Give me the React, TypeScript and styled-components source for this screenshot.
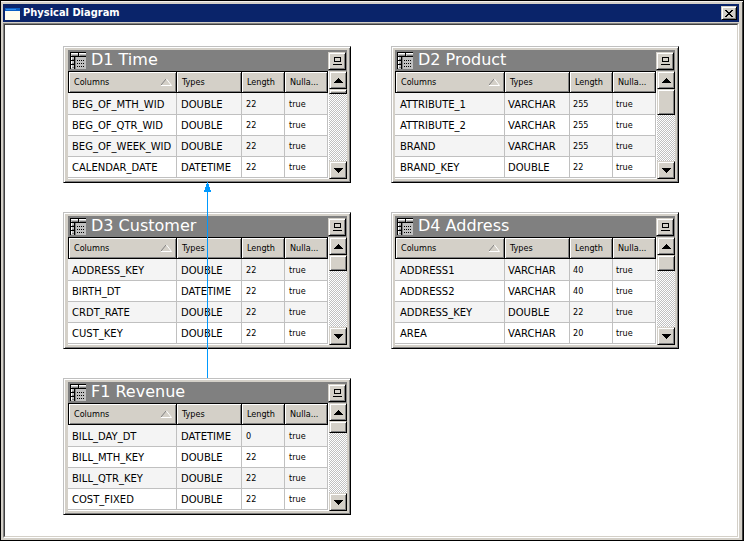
import React from "react";
import styled, { createGlobalStyle, css } from "styled-components";

const face = "#d4d0c8";
const shade = "#808080";
const grid = "#c0c0c0";

const GlobalStyle = createGlobalStyle`
  *, *::before, *::after { box-sizing: border-box; }
  body { margin: 0; background: #000; font-family: "DejaVu Sans", Verdana, sans-serif; color: #000; }
  button { font: inherit; margin: 0; padding: 0; }
`;

const raised = css`
  background: ${face};
  border: 1px solid;
  border-color: ${face} #000 #000 ${face};
  box-shadow: inset 1px 1px #fff, inset -1px -1px ${shade};
`;

const WindowFrame = styled.main`
  display: flex;
  flex-direction: column;
  min-height: 100vh;
  padding: 3px 4px 2px 2px;
  border: 1px solid #000;
  background: ${face};
  box-shadow: inset 0 1px #f4f2ee, inset -1px 0 #404040;
`;

const WindowBar = styled.header`
  display: flex;
  align-items: center;
  gap: 3px;
  height: 18px;
  padding: 0 2px;
  background: #0a246a;
  color: #fff;
`;

const WindowTitle = styled.h1`
  flex: 1;
  margin: 0;
  font: bold 11px/18px "DejaVu Sans Condensed", "DejaVu Sans", sans-serif;
`;

const CloseButton = styled.button`
  ${raised}
  display: grid;
  place-items: center;
  width: 16px;
  height: 14px;
`;

const Sunken = styled.div`
  display: flex;
  flex: 1;
  margin-top: 1px;
  border: 1px solid;
  border-color: ${shade} #fff #fff ${shade};
`;

const Canvas = styled.div`
  position: relative;
  flex: 1;
  border: 1px solid;
  border-color: #404040 ${face} ${face} #404040;
  background: #fff;
`;

const Node = styled.section<{ $x: number; $y: number; $wide: boolean }>`
  position: absolute;
  left: ${(p) => p.$x}px;
  top: ${(p) => p.$y}px;
  width: 288px;
  padding: 3px 3px 3px ${(p) => (p.$wide ? 3 : 4)}px;
  border: 1px solid;
  border-color: ${grid} #000 #000 ${grid};
  background: ${face};
  box-shadow: inset 1px 1px #fff, inset -1px -1px ${shade};
`;

const NodeBar = styled.header`
  display: flex;
  align-items: center;
  gap: 5px;
  height: 21px;
  padding: 0 1px 0 2px;
  background: ${shade};
  color: #fff;
`;

const NodeTitle = styled.h2`
  flex: 1;
  margin: 0;
  font-size: 16px;
  font-weight: normal;
  line-height: 19px;
  padding-bottom: 2px;
`;

const SquareButton = styled.button`
  ${raised}
  display: grid;
  place-items: center;
  flex: none;
  width: 18px;
  height: 18px;
`;

const NodeBody = styled.div`
  display: flex;
  height: 108px;
`;

const TableView = styled.div`
  flex: 1;
  min-width: 0;
  padding-right: 1px;
  overflow: hidden;
  background: #fff;
`;

const Table = styled.table`
  width: 100%;
  table-layout: fixed;
  border-spacing: 0;
  white-space: nowrap;
`;

const Col = styled.col<{ $w?: number }>`
  width: ${(p) => (p.$w ? p.$w + "px" : "auto")};
`;

const HeadCell = styled.th`
  height: 22px;
  padding: 0 4px 0 5px;
  border: solid #000;
  border-width: 1px 1px 1px 0;
  background: ${face};
  box-shadow: inset 1px 1px #fff, inset -1px -1px ${shade};
  font: normal 9px/20px "DejaVu Sans Condensed", "DejaVu Sans", sans-serif;
  text-align: left;

  &:first-child { border-left-width: 1px; }
`;

const HeadContent = styled.div`
  display: flex;
  align-items: center;
  justify-content: space-between;
`;

const Row = styled.tr`
  background: #fff;
  &:nth-child(odd) { background: #f4f4f4; }
`;

const Cell = styled.td<{ $small?: boolean; $pad: number }>`
  height: 21px;
  padding: 1px 0 0 ${(p) => p.$pad}px;
  border: solid ${grid};
  border-width: 0 1px 1px 0;
  font: ${(p) =>
    p.$small
      ? '9px/19px "DejaVu Sans Condensed", "DejaVu Sans", sans-serif'
      : '10px/19px "DejaVu Sans", sans-serif'};

  tr:first-child > & { height: 22px; }
`;

const ScrollBar = styled.div`
  display: flex;
  flex-direction: column;
  flex: none;
  width: 18px;
  background: repeating-conic-gradient(${grid} 0 25%, #fff 0 50%) 0 0 / 2px 2px;
`;

const Thumb = styled.div<{ $h: number }>`
  ${raised}
  height: ${(p) => p.$h}px;
  margin-bottom: auto;
`;

const Connector = styled.svg`
  position: absolute;
  left: 199px;
  top: 157px;
  pointer-events: none;
`;

const WindowIcon = () => (
  <svg width="15" height="13" viewBox="0 0 15 13" shapeRendering="crispEdges" aria-hidden="true">
    <path fill="#0a5ec4" d="M0 1h15v3H0z" />
    <path fill="#2f8ff0" d="M1 2h10v1H1z" />
    <path fill="#fffdf0" d="M0 4h15v9H0z" />
  </svg>
);

const CloseIcon = () => (
  <svg width="8" height="7" viewBox="0 0 8 7" shapeRendering="crispEdges" aria-hidden="true">
    <path d="M0 0h2v1H0zM6 0h2v1H6zM1 1h2v1H1zM5 1h2v1H5zM2 2h4v1H2zM3 3h2v1H3zM2 4h4v1H2zM1 5h2v1H1zM5 5h2v1H5zM0 6h2v1H0zM6 6h2v1H6z" />
  </svg>
);

const TableIcon = () => (
  <svg width="16" height="17" viewBox="0 0 16 17" shapeRendering="crispEdges" aria-hidden="true">
    <path fill={grid} d="M1 1h15v3H1zM1 5h3v12H1zM6 5h10v12H6z" />
    <path fill="#fff" d="M1 1h7v1H1zM9 1h7v1H9zM1 5h1v3H1zM1 9h1v3H1zM1 13h1v3H1z" />
    <path fill={shade} d="M2 3h6v1H2zM10 3h6v1h-6zM2 7h2v1H2zM2 11h2v1H2zM2 15h2v1H2z" />
    <path fill="#000" d="M0 0h16v1H0zM0 0h1v17H0zM8 1h1v3H8zM0 4h16v1H0zM4 4h1v13H4zM1 8h3v1H1zM1 12h3v1H1z" />
    <path fill={shade} d="M5 5h1v12H5z" />
    <path fill="none" stroke="#000" strokeDasharray="1 1" d="M7 8.5h8M7 11.5h8M7 14.5h8" />
  </svg>
);

const RestoreIcon = () => (
  <svg width="10" height="8" viewBox="0 0 10 8" shapeRendering="crispEdges" aria-hidden="true">
    <path d="M2 0h7v5H2zM1 7h9v1H1z" />
    <path fill={face} d="M3 1h5v3H3z" />
  </svg>
);

const SortIcon = () => (
  <svg width="11" height="7" viewBox="0 0 11 7" aria-hidden="true">
    <path fill="none" stroke={shade} d="M5 0L0 6" />
    <path fill="none" stroke="#fff" d="M5.5 0L10.5 6.5H0" />
  </svg>
);

const Arrow = ({ down = false }: { down?: boolean }) => (
  <svg width="9" height="5" viewBox="0 0 9 5" shapeRendering="crispEdges" aria-hidden="true">
    <path
      d={
        down
          ? "M0 0h9v1H0zM1 1h7v1H1zM2 2h5v1H2zM3 3h3v1H3zM4 4h1v1H4z"
          : "M4 0h1v1H4zM3 1h3v1H3zM2 2h5v1H2zM1 3h7v1H1zM0 4h9v1H0z"
      }
    />
  </svg>
);

type Field = [name: string, type: string, length: string];

interface Entity {
  title: string;
  x: number;
  y: number;
  wide?: boolean;
  thumb: number;
  fields: Field[];
}

const entities: Entity[] = [
  {
    title: "D1 Time", x: 58, y: 21, thumb: 5,
    fields: [
      ["BEG_OF_MTH_WID", "DOUBLE", "22"],
      ["BEG_OF_QTR_WID", "DOUBLE", "22"],
      ["BEG_OF_WEEK_WID", "DOUBLE", "22"],
      ["CALENDAR_DATE", "DATETIME", "22"],
    ],
  },
  {
    title: "D2 Product", x: 386, y: 21, wide: true, thumb: 26,
    fields: [
      ["ATTRIBUTE_1", "VARCHAR", "255"],
      ["ATTRIBUTE_2", "VARCHAR", "255"],
      ["BRAND", "VARCHAR", "255"],
      ["BRAND_KEY", "DOUBLE", "22"],
    ],
  },
  {
    title: "D3 Customer", x: 58, y: 187, thumb: 16,
    fields: [
      ["ADDRESS_KEY", "DOUBLE", "22"],
      ["BIRTH_DT", "DATETIME", "22"],
      ["CRDT_RATE", "DOUBLE", "22"],
      ["CUST_KEY", "DOUBLE", "22"],
    ],
  },
  {
    title: "D4 Address", x: 386, y: 187, wide: true, thumb: 16,
    fields: [
      ["ADDRESS1", "VARCHAR", "40"],
      ["ADDRESS2", "VARCHAR", "40"],
      ["ADDRESS_KEY", "DOUBLE", "22"],
      ["AREA", "VARCHAR", "20"],
    ],
  },
  {
    title: "F1 Revenue", x: 58, y: 353, thumb: 12,
    fields: [
      ["BILL_DAY_DT", "DATETIME", "0"],
      ["BILL_MTH_KEY", "DOUBLE", "22"],
      ["BILL_QTR_KEY", "DOUBLE", "22"],
      ["COST_FIXED", "DOUBLE", "22"],
    ],
  },
];

const EntityNode = ({ title, x, y, wide = false, thumb, fields }: Entity) => {
  const namePad = wide ? 5 : 4;
  const pad = wide ? 3 : 4;
  return (
    <Node $x={x} $y={y} $wide={wide}>
      <NodeBar>
        <TableIcon />
        <NodeTitle>{title}</NodeTitle>
        <SquareButton aria-label={`Minimize ${title}`}>
          <RestoreIcon />
        </SquareButton>
      </NodeBar>
      <NodeBody>
        <TableView>
          <Table aria-label={title}>
            <colgroup>
              <Col />
              <Col $w={65} />
              <Col $w={43} />
              <Col $w={43} />
            </colgroup>
            <thead>
              <tr>
                <HeadCell scope="col" aria-sort="ascending">
                  <HeadContent>
                    Columns
                    <SortIcon />
                  </HeadContent>
                </HeadCell>
                <HeadCell scope="col">Types</HeadCell>
                <HeadCell scope="col">Length</HeadCell>
                <HeadCell scope="col">Nulla...</HeadCell>
              </tr>
            </thead>
            <tbody>
              {fields.map(([name, type, length]) => (
                <Row key={name}>
                  <Cell $pad={namePad}>{name}</Cell>
                  <Cell $pad={pad}>{type}</Cell>
                  <Cell $pad={pad} $small>{length}</Cell>
                  <Cell $pad={pad} $small>true</Cell>
                </Row>
              ))}
            </tbody>
          </Table>
        </TableView>
        <ScrollBar>
          <SquareButton aria-label="Scroll up">
            <Arrow />
          </SquareButton>
          <Thumb $h={thumb} />
          <SquareButton aria-label="Scroll down">
            <Arrow down />
          </SquareButton>
        </ScrollBar>
      </NodeBody>
    </Node>
  );
};

export default function App() {
  return (
    <>
      <GlobalStyle />
      <WindowFrame>
        <WindowBar>
          <WindowIcon />
          <WindowTitle>Physical Diagram</WindowTitle>
          <CloseButton aria-label="Close">
            <CloseIcon />
          </CloseButton>
        </WindowBar>
        <Sunken>
          <Canvas>
            {entities.map((entity) => (
              <EntityNode key={entity.title} {...entity} />
            ))}
            <Connector width="7" height="196" viewBox="0 0 7 196" shapeRendering="crispEdges" aria-hidden="true">
              <path fill="#0099ff" d="M3 0h1v196H3zM2 2h3v3H2zM1 5h5v3H1zM0 8h7v2H0z" />
            </Connector>
          </Canvas>
        </Sunken>
      </WindowFrame>
    </>
  );
}
